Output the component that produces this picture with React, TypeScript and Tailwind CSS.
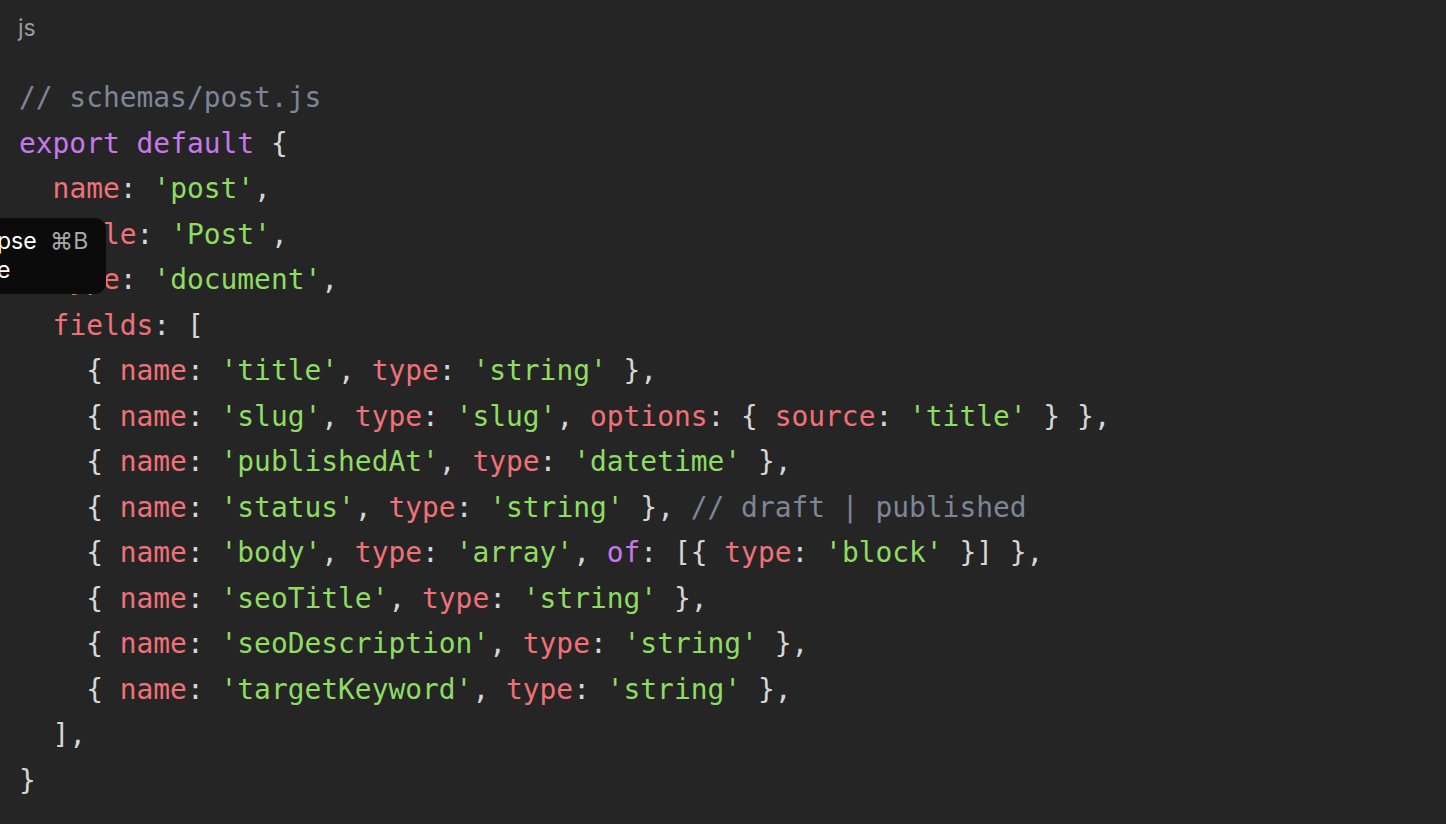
import React from 'react';

type Tok = [string, string];

const K = 'text-[#c678ec]';
const P = 'text-[#f07178]';
const S = 'text-[#8fdc62]';
const C = 'text-[#7d8596]';
const T = 'text-[#d6d6d6]';

const t = (s: string): Tok => [s, T];
const p = (s: string): Tok => [s, P];
const s = (v: string): Tok => [`'${v}'`, S];

const lines: Tok[][] = [
  [['// schemas/post.js', C]],
  [['export', K], t(' '), ['default', K], t(' {')],
  [t('  '), p('name'), t(': '), s('post'), t(',')],
  [t('  '), p('title'), t(': '), s('Post'), t(',')],
  [t('  '), p('type'), t(': '), s('document'), t(',')],
  [t('  '), p('fields'), t(': [')],
  [t('    { '), p('name'), t(': '), s('title'), t(', '), p('type'), t(': '), s('string'), t(' },')],
  [
    t('    { '), p('name'), t(': '), s('slug'), t(', '), p('type'), t(': '), s('slug'), t(', '),
    p('options'), t(': { '), p('source'), t(': '), s('title'), t(' } },'),
  ],
  [t('    { '), p('name'), t(': '), s('publishedAt'), t(', '), p('type'), t(': '), s('datetime'), t(' },')],
  [
    t('    { '), p('name'), t(': '), s('status'), t(', '), p('type'), t(': '), s('string'), t(' }, '),
    ['// draft | published', C],
  ],
  [
    t('    { '), p('name'), t(': '), s('body'), t(', '), p('type'), t(': '), s('array'), t(', '),
    ['of', K], t(': [{ '), p('type'), t(': '), s('block'), t(' }] },'),
  ],
  [t('    { '), p('name'), t(': '), s('seoTitle'), t(', '), p('type'), t(': '), s('string'), t(' },')],
  [t('    { '), p('name'), t(': '), s('seoDescription'), t(', '), p('type'), t(': '), s('string'), t(' },')],
  [t('    { '), p('name'), t(': '), s('targetKeyword'), t(', '), p('type'), t(': '), s('string'), t(' },')],
  [t('  ],')],
  [t('}')],
];

export default function App() {
  return (
    <div className="relative min-h-[824px] w-full bg-[#252525] overflow-hidden">
      <div className="px-[18px] pt-[13px] font-['Inter',sans-serif] text-[23px] leading-[30px] text-[#9a9a9a]">
        js
      </div>

      <pre className="mt-[32px] px-[19px] font-['DejaVu_Sans_Mono',monospace] text-[27.9px] leading-[45.5px] whitespace-pre">
        {lines.map((line, i) => (
          <div key={i}>
            {line.map(([text, cls], j) => (
              <span key={j} className={cls}>
                {text}
              </span>
            ))}
          </div>
        ))}
      </pre>

      {/* sidebar tooltip, clipped by the left edge */}
      <div className="absolute left-0 top-[218px] h-[76px] w-[106px] rounded-r-[11px] bg-[#0b0b0b] font-['Inter',sans-serif] text-[23px] leading-[29px] text-white">
        <div className="mt-[9px] ml-[-3px] whitespace-nowrap">
          pse <span className="ml-[7px] text-[#a8a8a8]">⌘B</span>
        </div>
        <div className="ml-[-3px]">e</div>
      </div>
    </div>
  );
}
